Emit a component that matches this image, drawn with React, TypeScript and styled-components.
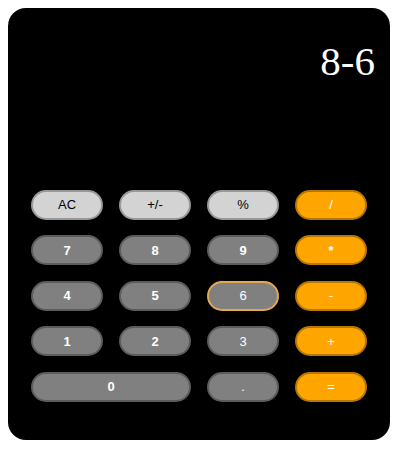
import React from "react";
import styled, { createGlobalStyle } from "styled-components";

const Global = createGlobalStyle`
  body {
    margin: 8px;
    background: #ffffff;
    font-family: "Liberation Sans", Arial, sans-serif;
  }
`;

const Panel = styled.div`
  width: 382px;
  height: 432px;
  box-sizing: border-box;
  background: #000000;
  border-radius: 18px;
  display: flex;
  flex-direction: column;
`;

const Display = styled.div`
  height: 181.5px;
  box-sizing: border-box;
  padding: 30px 15px 0 0;
  text-align: right;
  color: #ffffff;
  font-family: "Liberation Serif", "Times New Roman", serif;
  font-size: 41px;
  line-height: 46px;
`;

const Keypad = styled.div`
  margin: 0 23px;
  display: grid;
  grid-template-columns: repeat(4, 72px);
  grid-auto-rows: 30px;
  column-gap: 16px;
  row-gap: 15.5px;
`;

type Kind = "fn" | "num" | "op";

const colors: Record<Kind, { bg: string; fg: string }> = {
  fn: { bg: "#d3d3d3", fg: "#000000" },
  num: { bg: "#808080", fg: "#ffffff" },
  op: { bg: "#ffa500", fg: "#ffffff" },
};

const Key = styled.button<{ $kind: Kind; $wide?: boolean; $active?: boolean; $bold?: boolean }>`
  grid-column: ${(p) => (p.$wide ? "span 2" : "auto")};
  box-sizing: border-box;
  margin: 0;
  padding: 0;
  border-radius: 15px;
  border: 2px solid ${(p) => (p.$active ? "#e2a94e" : "rgba(0,0,0,0.28)")};
  background: ${(p) => colors[p.$kind].bg};
  color: ${(p) => colors[p.$kind].fg};
  font-family: "Liberation Sans", Arial, sans-serif;
  font-size: 13px;
  font-weight: ${(p) => (p.$bold ? 700 : 400)};
  cursor: pointer;
`;

const keys: { label: string; kind: Kind; wide?: boolean; active?: boolean; bold?: boolean }[] = [
  { label: "AC", kind: "fn" },
  { label: "+/-", kind: "fn" },
  { label: "%", kind: "fn" },
  { label: "/", kind: "op" },
  { label: "7", kind: "num", bold: true },
  { label: "8", kind: "num", bold: true },
  { label: "9", kind: "num", bold: true },
  { label: "*", kind: "op", bold: true },
  { label: "4", kind: "num", bold: true },
  { label: "5", kind: "num", bold: true },
  { label: "6", kind: "num", active: true },
  { label: "-", kind: "op" },
  { label: "1", kind: "num", bold: true },
  { label: "2", kind: "num", bold: true },
  { label: "3", kind: "num" },
  { label: "+", kind: "op" },
  { label: "0", kind: "num", wide: true, bold: true },
  { label: ".", kind: "num" },
  { label: "=", kind: "op" },
];

export default function App() {
  return (
    <>
      <Global />
      <Panel>
        <Display>8-6</Display>
        <Keypad>
          {keys.map((k) => (
            <Key key={k.label} $kind={k.kind} $wide={k.wide} $active={k.active} $bold={k.bold}>
              {k.label}
            </Key>
          ))}
        </Keypad>
      </Panel>
    </>
  );
}
